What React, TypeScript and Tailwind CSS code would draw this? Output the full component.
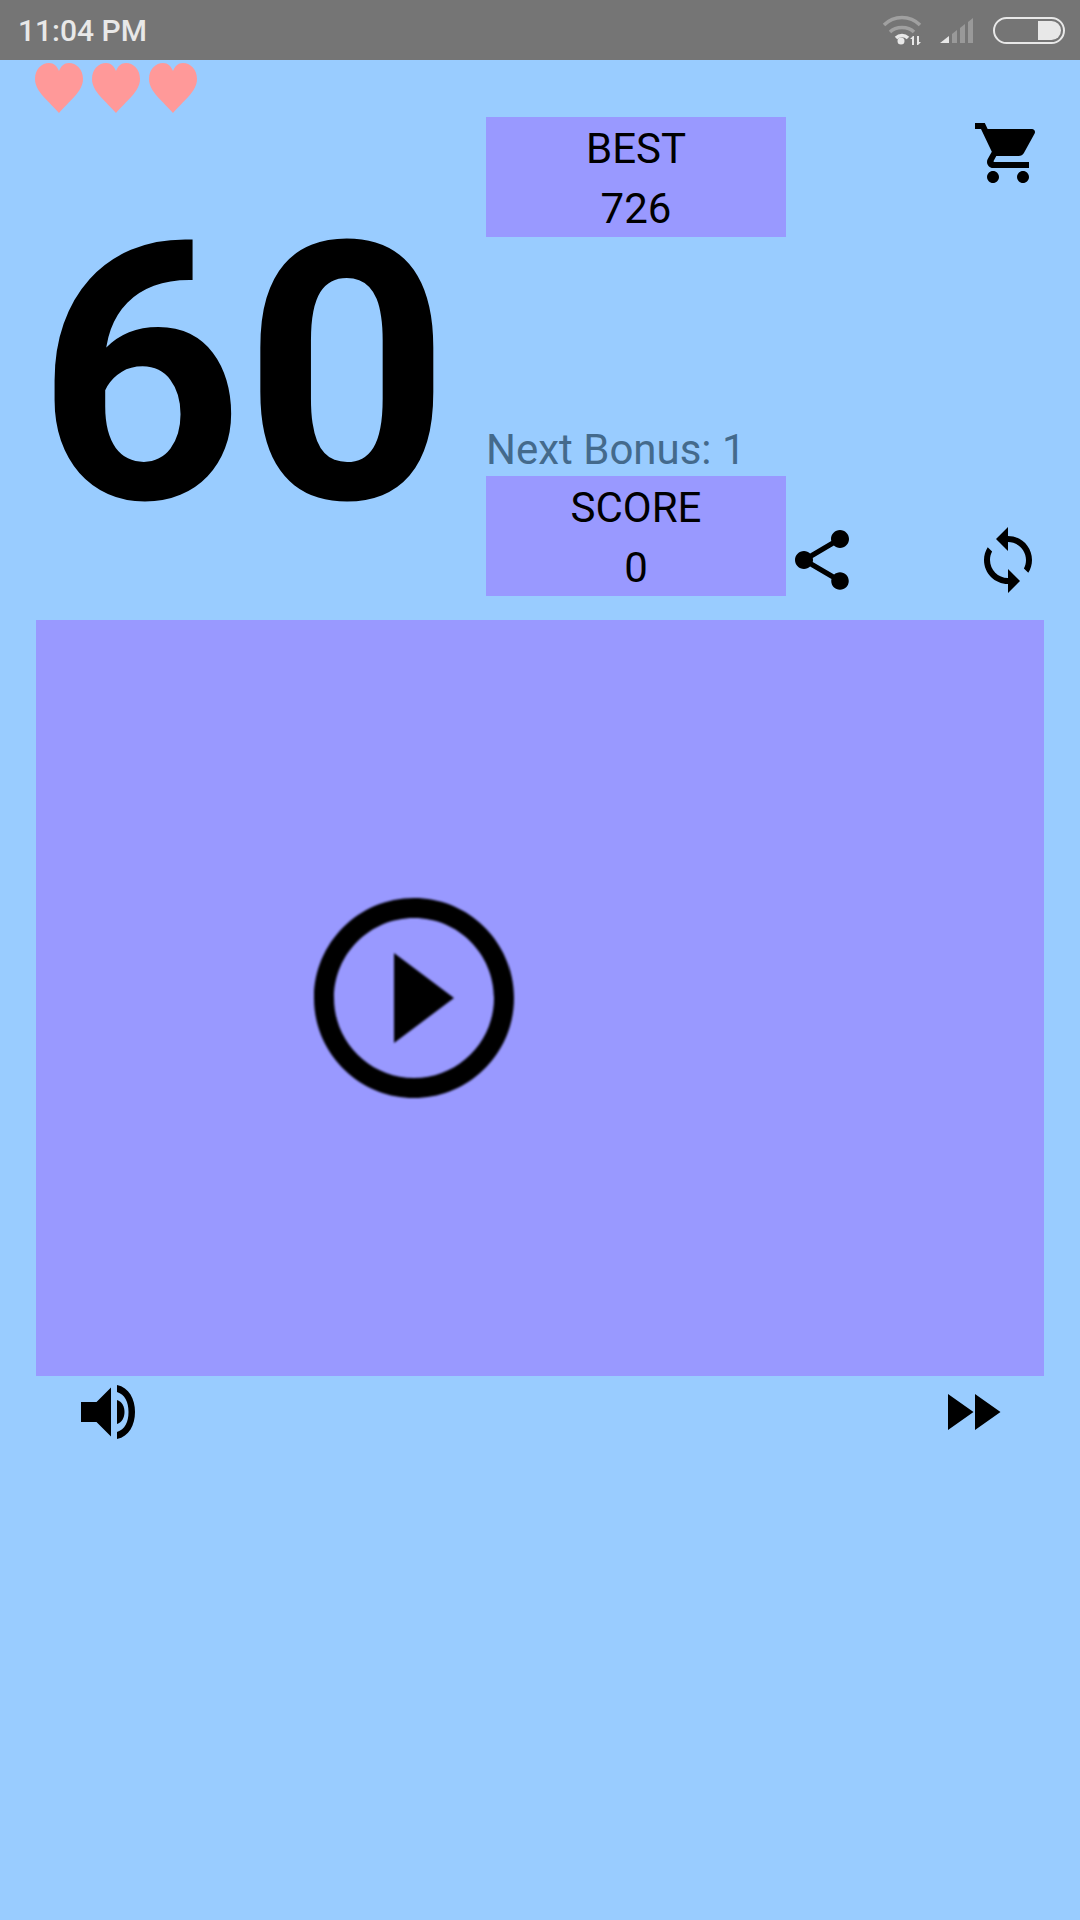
import { ReactNode } from "react";

const SYNC =
  "M12 4V1L8 5l4 4V6c3.31 0 6 2.69 6 6 0 1.01-.25 1.97-.7 2.8l1.46 1.46C19.54 15.03 20 13.57 20 12c0-4.42-3.58-8-8-8zm0 14c-3.31 0-6-2.69-6-6 0-1.01.25-1.97.7-2.8L5.24 7.74C4.46 8.97 4 10.43 4 12c0 4.42 3.58 8 8 8v3l4-4-4-4v3z";
const CART =
  "M7 18c-1.1 0-1.99.9-1.99 2S5.9 22 7 22s2-.9 2-2-.9-2-2-2zM1 2v2h2l3.6 7.59-1.35 2.45c-.16.28-.25.61-.25.96 0 1.1.9 2 2 2h12v-2H7.42c-.14 0-.25-.11-.25-.25l.03-.12.9-1.63h7.45c.75 0 1.41-.41 1.75-1.03l3.58-6.49c.08-.14.12-.31.12-.48 0-.55-.45-1-1-1H5.21l-.94-2H1zm16 16c-1.1 0-1.99.9-1.99 2s.89 2 1.99 2 2-.9 2-2-.9-2-2-2z";
const SHARE =
  "M18 16.08c-.76 0-1.44.3-1.96.77L8.91 12.7c.05-.23.09-.46.09-.7s-.04-.47-.09-.7l7.05-4.11c.54.5 1.25.81 2.04.81 1.66 0 3-1.34 3-3s-1.34-3-3-3-3 1.34-3 3c0 .24.04.47.09.7L8.04 9.81C7.5 9.31 6.79 9 6 9c-1.66 0-3 1.34-3 3s1.34 3 3 3c.79 0 1.5-.31 2.04-.81l7.12 4.16c-.05.21-.08.43-.08.65 0 1.61 1.31 2.92 2.92 2.92 1.61 0 2.92-1.31 2.92-2.92s-1.31-2.92-2.92-2.92z";
const FAST_FORWARD = "M4 18l8.5-6L4 6v12zm9-12v12l8.5-6L13 6z";
const PLAY_OUTLINE =
  "M10 16.5l6-4.5-6-4.5v9zM12 2C6.48 2 2 6.48 2 12s4.48 10 10 10 10-4.48 10-10S17.52 2 12 2zm0 18c-4.41 0-8-3.59-8-8s3.59-8 8-8 8 3.59 8 8-3.59 8-8 8z";

function MaterialIcon({ d, className }: { d: string; className?: string }) {
  return (
    <svg viewBox="0 0 24 24" fill="black" className={className ?? "h-[72px] w-[72px] shrink-0"}>
      <path d={d} />
    </svg>
  );
}

function VolumeIcon() {
  return (
    <svg viewBox="0 0 72 72" className="h-[72px] w-[72px] shrink-0" fill="black">
      <path d="M9 26h15.500L39 11.500v49L24.500 46H9z" />
      <path d="M45 24c5 1.500 7.500 6.500 7.500 12S50 46.500 45 48z" />
      <path d="M45 9c12 2.500 18 14 18 27s-6 24.500-18 27v-7c8-2.500 11.500-10 11.500-20S53 18.500 45 16z" />
    </svg>
  );
}

function Heart() {
  return (
    <svg viewBox="0 0 48 50" className="h-[50px] w-[48px] shrink-0" fill="#ff9999">
      <path d="M24 50C15 39 0 29 0 16 0 6 7 0 14 0c5 0 8 3 10 8 2-5 5-8 10-8 7 0 14 6 14 16 0 13-15 23-24 34z" />
    </svg>
  );
}

function ScoreBox({ label, value }: { label: string; value: ReactNode }) {
  return (
    <div className="flex h-[120px] w-[300px] shrink-0 flex-col items-center justify-center bg-[#9999ff] pt-[4px] text-[42px] leading-[60px] text-black">
      <span>{label}</span>
      <span>{value}</span>
    </div>
  );
}

function StatusBar() {
  return (
    <div className="flex h-[60px] shrink-0 items-center justify-between bg-[#757575] pl-[18px] pr-[15px] text-[#e8e8e8]">
      <span className="text-[30px] font-medium">11:04 PM</span>
      <div className="flex items-center">
        <svg viewBox="0 0 42 32" className="h-[32px] w-[42px]" fill="none">
          <path d="M2 11C12 1 28 1 38 11" stroke="#a0a0a0" strokeWidth="3.500" />
          <path d="M8 18c6-6 18-6 24 0" stroke="#a0a0a0" strokeWidth="3.500" />
          <path d="M14 24c3.500-3.500 8.500-3.500 12 0" stroke="#e8e8e8" strokeWidth="3.500" />
          <circle cx="19" cy="27" r="3.500" fill="#e8e8e8" />
          <path d="M31 22l-3 3h2v6h2v-9zM35 22h2v6h2l-3 3h-1z" fill="#e8e8e8" />
        </svg>
        <svg viewBox="0 0 40 28" className="ml-[15px] h-[28px] w-[40px]">
          <path d="M1 27l9-7v7z" fill="#e8e8e8" />
          <path d="M13 27v-9l5-4v13zM21 27V12l5-4v19zM29 27V6l5-4v25z" fill="#999" />
        </svg>
        <div className="ml-[14px] flex h-[27px] w-[72px] justify-end rounded-full border-[2px] border-[#e8e8e8] p-[2px]">
          <div className="w-[23px] rounded-r-full bg-[#e8e8e8]" />
        </div>
      </div>
    </div>
  );
}

export default function App() {
  return (
    <div
      className="flex h-[1920px] w-[1080px] flex-col overflow-hidden bg-[#99ccff]"
      style={{ fontFamily: "Roboto, sans-serif" }}
    >
      <StatusBar />

      <div className="flex h-[560px] shrink-0">
        <div className="flex w-[486px] shrink-0 flex-col">
          <div className="flex gap-[9px] pl-[35px] pt-[3px]">
            <Heart />
            <Heart />
            <Heart />
          </div>
          <span className="pl-[37px] pt-[44px] text-[360px] font-bold leading-[436px] text-black">60</span>
        </div>

        <div className="flex w-[300px] shrink-0 flex-col pt-[57px]">
          <ScoreBox label="BEST" value="726" />
          <span className="mt-[184px] pt-[3px] text-[42px] leading-[52px] text-[#446a8c]">Next Bonus: 1</span>
          <ScoreBox label="SCORE" value="0" />
        </div>

        <div className="flex flex-1 flex-col justify-between pb-[24px] pr-[36px] pt-[57px]">
          <div className="flex justify-end">
            <MaterialIcon d={CART} />
          </div>
          <div className="flex justify-between">
            <MaterialIcon d={SHARE} />
            <MaterialIcon d={SYNC} />
          </div>
        </div>
      </div>

      <div className="mx-[36px] flex h-[756px] shrink-0 items-center bg-[#9999ff] pl-[258px]">
        <MaterialIcon d={PLAY_OUTLINE} className="h-[240px] w-[240px] blur-[0.8px]" />
      </div>

      <div className="flex justify-between px-[72px]">
        <VolumeIcon />
        <MaterialIcon d={FAST_FORWARD} />
      </div>
    </div>
  );
}
